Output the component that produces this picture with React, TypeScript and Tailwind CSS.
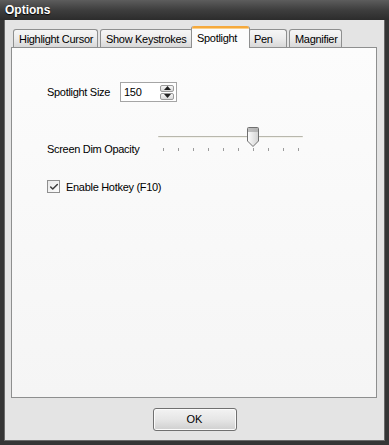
import { Check } from 'lucide-react';

const font = { fontFamily: '"Liberation Sans", Arial, sans-serif' };

type TabProps = { label: string; width: number; active?: boolean };

function Tab({ label, width, active }: TabProps) {
  if (active) {
    return (
      <div
        className="relative z-10 -mx-[2px] -mb-px flex h-[22px] flex-col overflow-hidden rounded-t-[3px] border-x border-[#8e8f8f] bg-[#fcfcfc] text-[11px] tracking-[-0.3px] text-black"
        style={{ width }}
      >
        <div className="h-[2px] bg-[#f5a93c]" />
        <div className="h-px bg-[#fbd08a]" />
        <div className="pl-[5px] pt-px">{label}</div>
      </div>
    );
  }
  return (
    <div
      className="flex h-[18px] items-center rounded-t-[3px] border border-b-0 border-[#8e8f8f] bg-gradient-to-b from-[#f6f6f6] via-[#ececec] to-[#d8d8d8] pl-[5px] pt-px text-[11px] tracking-[-0.3px] text-black"
      style={{ width }}
    >
      {label}
    </div>
  );
}

function Spinner() {
  return (
    <div className="flex h-[20px] w-[57px] items-center border border-[#a5a5a5] bg-white pl-[3px] text-[11px]">
      <span className="flex-1">150</span>
      <div className="mr-[2px] flex flex-col gap-px">
        <div className="flex h-[7px] w-[14px] items-center justify-center rounded-[2px] border border-[#9a9a9a] bg-gradient-to-b from-[#f6f6f6] to-[#dadada]">
          <svg width="7" height="4" viewBox="0 0 7 4">
            <path d="M0 4 L3.5 0 L7 4 Z" fill="#222" />
          </svg>
        </div>
        <div className="flex h-[7px] w-[14px] items-center justify-center rounded-[2px] border border-[#9a9a9a] bg-gradient-to-b from-[#f6f6f6] to-[#dadada]">
          <svg width="7" height="4" viewBox="0 0 7 4">
            <path d="M0 0 L3.5 4 L7 0 Z" fill="#222" />
          </svg>
        </div>
      </div>
    </div>
  );
}

function Slider() {
  const ticks = Array.from({ length: 10 }, (_, i) => i);
  return (
    <div className="relative h-[28px] w-[145px]">
      <div className="absolute left-0 right-0 top-[9px] h-[2px] rounded-full border-t border-[#b8b7ad] bg-[#f2f1ea]" />
      <div className="absolute left-[5px] top-[21px] flex gap-[14px]">
        {ticks.map((t) => (
          <div key={t} className="h-[3px] w-px bg-[#9c9c9c]" />
        ))}
      </div>
      <svg className="absolute left-[89px] top-0" width="12" height="20" viewBox="0 0 12 20">
        <defs>
          <linearGradient id="thumb" x1="0" x2="1" y1="0" y2="0">
            <stop offset="0" stopColor="#fdfdfd" />
            <stop offset="1" stopColor="#d2d2d2" />
          </linearGradient>
        </defs>
        <path d="M0.5 1.5 Q0.5 0.5 1.5 0.5 L10.5 0.5 Q11.5 0.5 11.5 1.5 L11.5 14 L6 19.5 L0.5 14 Z" fill="url(#thumb)" stroke="#6f6f6f" />
        <rect x="1" y="1" width="10" height="4" fill="#9a9a9a" opacity="0.6" />
      </svg>
    </div>
  );
}

export default function App() {
  return (
    <div className="flex h-[445px] w-[389px] flex-col bg-[#353535] px-[4px] pb-[4px] select-none" style={font}>
      <div className="-mx-[4px] flex h-[20px] items-center bg-gradient-to-b from-[#5d5d5d] via-[#3e3e3e] to-[#2c2c2c] px-[5px] text-[12px] font-bold text-white [text-shadow:0_1px_1px_#000]">
        Options
      </div>
      <div className="flex flex-1 flex-col border border-t-0 border-[#6a6a6a] bg-[#e4e4e4] px-[6px] pt-[6px]">
        <div className="flex items-end pl-[2px]">
          <div className="flex items-end gap-[2px]">
            <Tab label="Highlight Cursor" width={85} />
            <Tab label="Show Keystrokes" width={93} />
          </div>
          <Tab label="Spotlight" width={59} active />
          <div className="flex items-end gap-[2px]">
            <Tab label="Pen" width={39} />
            <Tab label="Magnifier" width={53} />
          </div>
        </div>
        <div className="h-[351px] w-[366px] border border-[#8e8f8f] bg-gradient-to-b from-[#fcfcfc] to-[#f5f5f5] pl-[35px] pt-[34px] text-[11px] tracking-[-0.3px] text-black">
          <div className="flex items-center">
            <span className="w-[73px]">Spotlight Size</span>
            <Spinner />
          </div>
          <div className="mt-[25px] flex items-start">
            <span className="mt-[14px] w-[111px]">Screen Dim Opacity</span>
            <Slider />
          </div>
          <div className="mt-[21px] flex items-center gap-[6px]">
            <div className="flex h-[13px] w-[13px] items-center justify-center border border-[#8f8f8f] bg-gradient-to-br from-[#e8e8e8] to-[#fdfdfd]">
              <Check size={10} strokeWidth={3.5} color="#3a3a3a" />
            </div>
            <span>Enable Hotkey (F10)</span>
          </div>
        </div>
        <div className="flex flex-1 items-center justify-center">
          <button className="h-[23px] w-[84px] rounded-[3px] border border-[#707070] bg-gradient-to-b from-[#f3f3f3] via-[#e6e6e6] to-[#cfcfcf] text-[11px] text-black shadow-[inset_0_0_0_1px_#fbfbfb]">
            OK
          </button>
        </div>
      </div>
    </div>
  );
}
